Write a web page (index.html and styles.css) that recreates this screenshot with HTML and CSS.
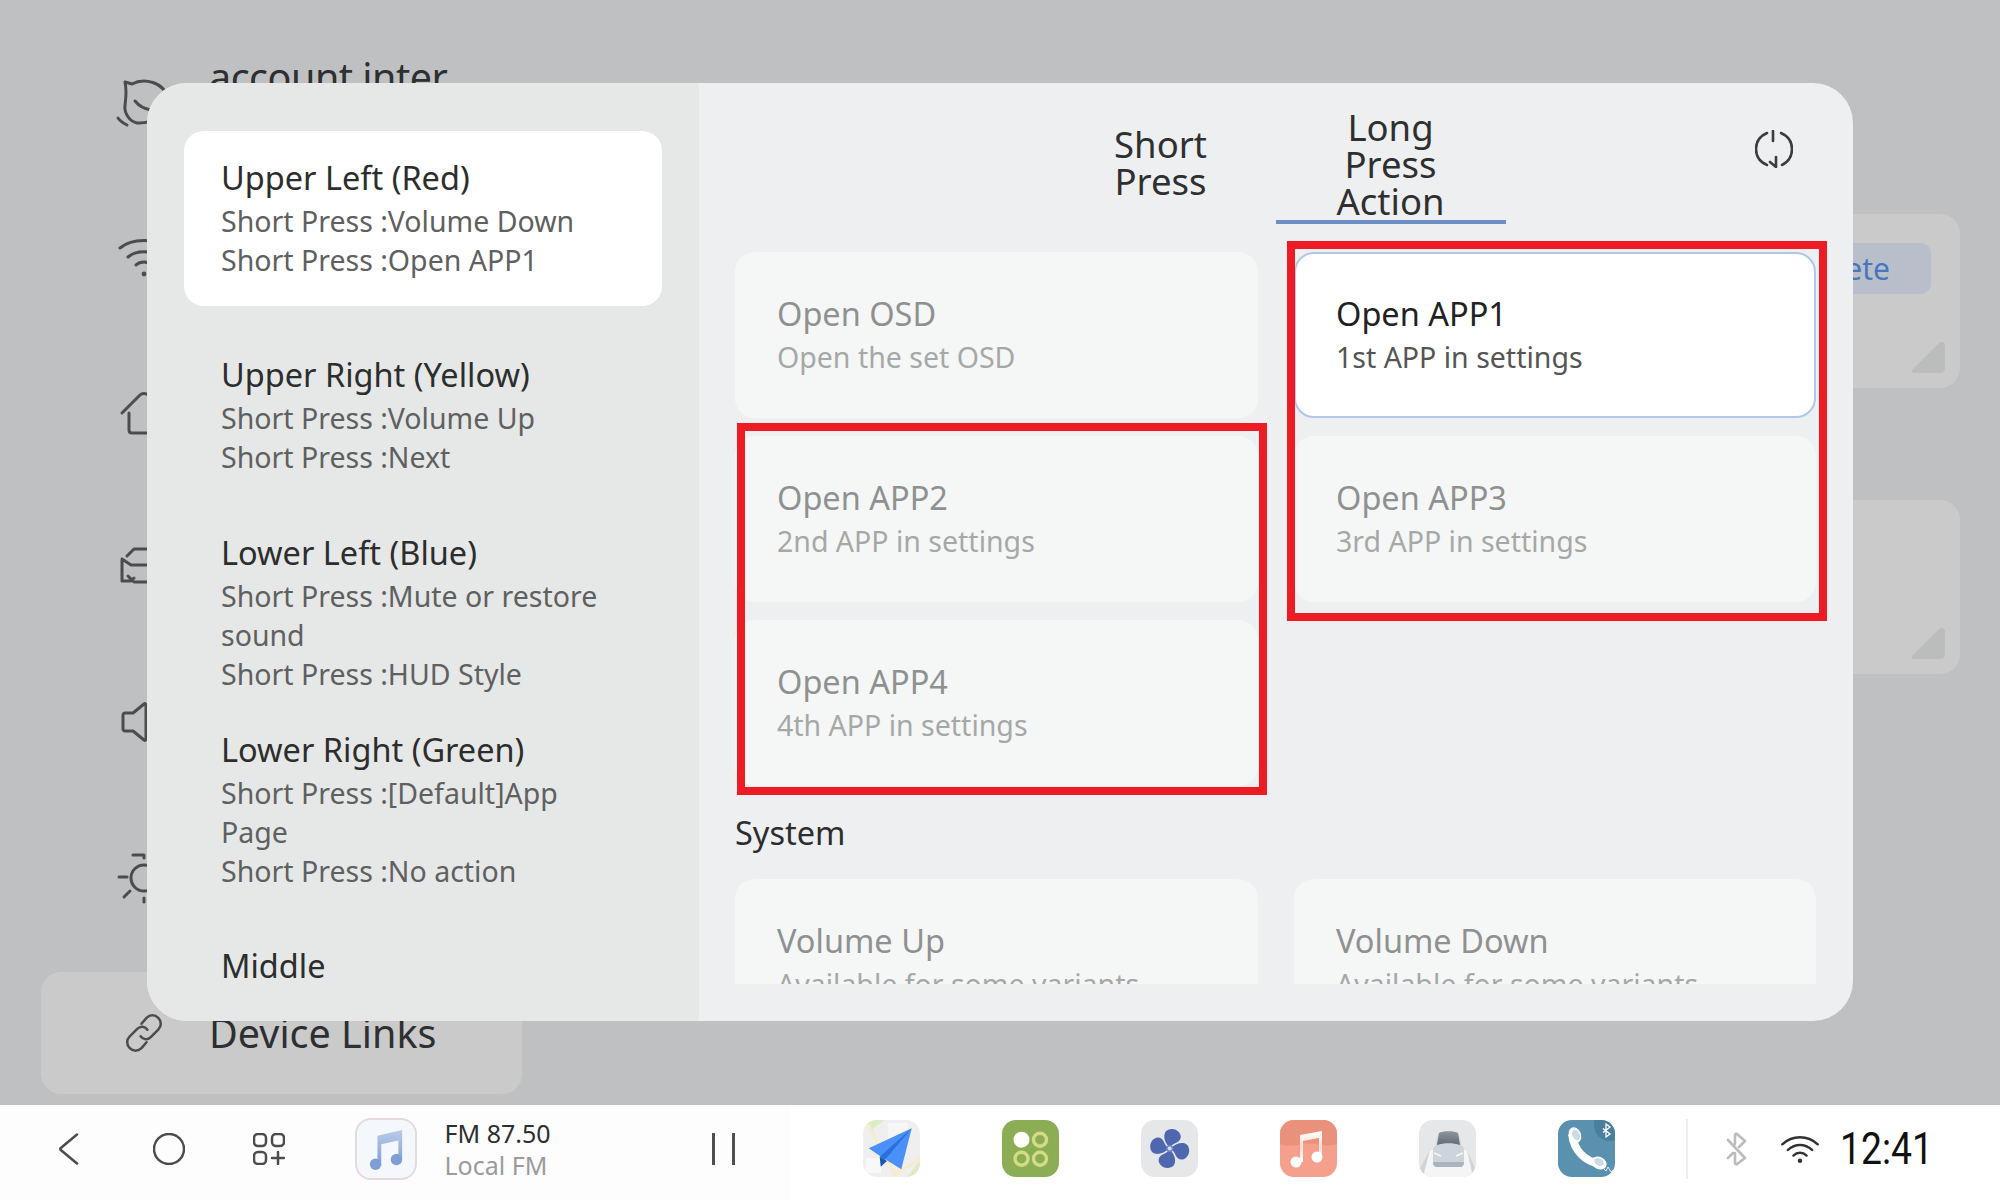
FILE: index.html
```html
<!DOCTYPE html>
<html lang="en">
<head>
<meta charset="utf-8">
<title>Steering wheel keys</title>
<link rel="stylesheet" href="styles.css">
</head>
<body>
<div class="screen">
  <main class="page">
    <nav class="side">
      <div class="side-row">
        <svg class="side-icon" viewBox="0 0 48 48"><path d="M2 3 L9 5 C20 -1 42 2 44 20 C45 32 32 45 14 44 C6 42 1 34 2 26 C3 18 4 12 2 3Z M12 22 C16 27 22 30 28 31 M-5 39 C-3 42 0 44 4 46" transform="translate(3 0)"/></svg>
        <span class="side-label side-label-up">account inter</span>
      </div>
      <div class="side-row">
        <svg class="side-icon" viewBox="0 0 48 48"><path d="M0 14 C12 4 36 4 48 14 M8 23 C16 16 32 16 40 23 M16 31 C20 27 28 27 32 31"/><circle cx="24" cy="40" r="2.4" class="dot"/></svg>
      </div>
      <div class="side-row">
        <svg class="side-icon" viewBox="0 0 48 48"><path d="M2 24 L20 6 C22 4 26 4 28 6 L46 24 M9 24 L9 41 C9 43 10 44 12 44 L36 44 C38 44 39 43 39 41 L39 24"/></svg>
      </div>
      <div class="side-row">
        <svg class="side-icon" viewBox="0 0 48 48"><path d="M7 12 L14 5 L44 5 L44 38 L14 38 L8 32 M2 15 L11 21 L44 21 M2 15 L2 37 L11 37 L14 34"/></svg>
      </div>
      <div class="side-row">
        <svg class="side-icon" viewBox="0 0 48 48"><path d="M3 16 L3 30 C3 31 4 32 5 32 L13 32 L24 41 C25 42 26 41 26 40 L26 6 C26 5 25 4 24 5 L13 14 L5 14 C4 14 3 15 3 16Z"/></svg>
      </div>
      <div class="side-row">
        <svg class="side-icon" viewBox="0 0 48 48"><circle cx="24" cy="24" r="13"/><path d="M24 1 L24 4 M24 44 L24 48 M-1 23 L7 23 M10 37 L4 43 M13 1 L24 1"/></svg>
      </div>
      <div class="side-row side-row-active">
        <svg class="side-icon" viewBox="0 0 48 48"><path transform="translate(24 24) scale(.84) translate(-24 -24)" d="M21 13 L27 6 C31 2 37 2 41 6 C45 10 45 16 41 20 L32 29 C28 33 23 32 20 28 M27 35 L21 42 C17 46 11 46 7 42 C3 38 3 32 7 28 L16 19 C20 15 25 16 28 20"/></svg>
        <span class="side-label">Device Links</span>
      </div>
    </nav>
    <section class="content">
      <div class="bg-card">
        <div class="bg-button">Delete</div>
        <svg class="corner" viewBox="0 0 33 31"><path d="M0 28 L27 1 C29 -1 33 0 33 3 L33 26 C33 29 31 31 28 31 L2 31 C0 31 -1 29 0 28Z"/></svg>
      </div>
      <div class="bg-card">
        <svg class="corner" viewBox="0 0 33 31"><path d="M0 28 L27 1 C29 -1 33 0 33 3 L33 26 C33 29 31 31 28 31 L2 31 C0 31 -1 29 0 28Z"/></svg>
      </div>
    </section>
  </main>

  <footer class="taskbar">
    <div class="media">
      <svg class="nav-icon" viewBox="0 0 32 32"><path d="M25 1.500 L8.800 15 C8.200 15.600 8.200 16.400 8.800 17 L25 30.500"/></svg>
      <svg class="nav-icon" viewBox="0 0 32 32"><circle cx="16" cy="16" r="15"/></svg>
      <svg class="nav-icon" viewBox="0 0 32 32"><rect x="1" y="1" width="12" height="12" rx="4"/><rect x="19" y="1" width="12" height="12" rx="4"/><rect x="1" y="19" width="12" height="12" rx="4"/><path d="M19 25 L31 25 M25 19 L25 31"/></svg>
      <div class="music-tile">
        <svg class="music-note" viewBox="0 0 40 44">
          <defs><linearGradient id="noteFade" x1="0" y1="0" x2="0" y2="1"><stop offset="0" stop-color="#b9cbeb"/><stop offset="1" stop-color="#7d9fd3"/></linearGradient></defs>
          <path d="M11 8 L37 2 L37 33 L33 33 L33 13 L15 17 L15 39 L11 39Z" fill="url(#noteFade)"/>
          <circle cx="9" cy="38" r="6" fill="#7d9fd3"/><circle cx="31" cy="33" r="6" fill="#7d9fd3"/>
        </svg>
      </div>
      <div class="track">
        <div class="track-name">FM 87.50</div>
        <div class="track-sub">Local FM</div>
      </div>
      <div class="pause"><span class="pause-bar"></span><span class="pause-bar"></span></div>
    </div>
    <div class="dock">
      <svg class="app" viewBox="0 0 57 57">
        <rect width="57" height="57" fill="#efefef"/>
        <path d="M0 0 L22 0 L8 10Z M44 57 L57 40 L57 57Z" fill="#dcecc4"/>
        <rect x="25" y="3" width="20" height="15" fill="#f6f6f6"/><rect x="3" y="38" width="15" height="15" fill="#f8f8f8"/>
        <path d="M5 4 L33 57 M33 54 L57 39" stroke="#f6eccb" stroke-width="3" fill="none"/>
        <path d="M48.700 8.300 L5.700 28.300 L17 36 L38.300 49.300Z" fill="#4a90f8"/>
        <path d="M48.700 8.300 L16.700 36.700 L21.700 40Z" fill="#2a70d8"/>
        <path d="M16.700 36.700 L17.700 46.700 L24 41Z" fill="#1858b0"/>
      </svg>
      <svg class="app" viewBox="0 0 57 57">
        <rect width="57" height="57" fill="#8bae54"/>
        <circle cx="19.500" cy="19.700" r="8" fill="#fff"/>
        <g fill="none" stroke="#d3dc84" stroke-width="3.400"><circle cx="38" cy="19.700" r="6.500"/><circle cx="19.500" cy="38.700" r="6.500"/><circle cx="38" cy="38.700" r="6.500"/></g>
      </svg>
      <svg class="app" viewBox="0 0 57 57">
        <rect width="57" height="57" fill="#e5e7e9"/>
        <g transform="translate(28.700 28.500)" fill="#4f67ae">
          <path d="M-1 -2 C-5 -6 -7 -13 -4 -17 C-1 -20.500 6 -20.500 9.500 -16 C12.500 -12 11 -8 7 -6 C4 -5 2 -3 1 -2Z"/>
          <path d="M-1 -2 C-5 -6 -7 -13 -4 -17 C-1 -20.500 6 -20.500 9.500 -16 C12.500 -12 11 -8 7 -6 C4 -5 2 -3 1 -2Z" transform="rotate(90)"/>
          <path d="M-1 -2 C-5 -6 -7 -13 -4 -17 C-1 -20.500 6 -20.500 9.500 -16 C12.500 -12 11 -8 7 -6 C4 -5 2 -3 1 -2Z" transform="rotate(180)"/>
          <path d="M-1 -2 C-5 -6 -7 -13 -4 -17 C-1 -20.500 6 -20.500 9.500 -16 C12.500 -12 11 -8 7 -6 C4 -5 2 -3 1 -2Z" transform="rotate(270)"/>
          <circle r="3.500" fill="#6f85c2"/><circle r="2" fill="#d5dcec"/>
        </g>
      </svg>
      <svg class="app" viewBox="0 0 57 57">
        <defs><linearGradient id="stemFade" x1="0" y1="0" x2="0" y2="1"><stop offset="0" stop-color="#fff"/><stop offset=".5" stop-color="#fbdcd3"/><stop offset="1" stop-color="#fff"/></linearGradient></defs>
        <rect width="57" height="57" fill="#f5a08c"/>
        <path d="M0 0 L57 0 L57 24 C45 28 35 22 22 24 C12 26 6 26 0 24Z" fill="#ea917b"/>
        <path d="M20 15 L42 11 L42 37 L39 37 L39 18 L23 21 L23 42 L20 42Z" fill="url(#stemFade)"/>
        <circle cx="16" cy="42" r="5.500" fill="#fff"/><circle cx="37" cy="37" r="5.500" fill="#fff"/>
      </svg>
      <svg class="app" viewBox="0 0 57 57">
        <defs><linearGradient id="carGlass" x1="0" y1="0" x2="0" y2="1"><stop offset="0" stop-color="#8d969e"/><stop offset="1" stop-color="#626c76"/></linearGradient></defs>
        <rect width="57" height="57" fill="#e5e7e9"/>
        <path d="M12 28 L0 50 L0 57 L6 57 Z M47 28 L57 50 L57 57 L51 57Z" fill="#cdd5dc"/>
        <path d="M11 30 L48 30 L54 57 L4 57Z" fill="#f3f5f7"/>
        <path d="M17 25 C17 22 19 12 22 12 L37 12 C40 12 42 22 42 25 L45 28 L45 42 C45 46 43 47 41 47 L18 47 C16 47 14 46 14 42 L14 28Z" fill="#ccd5da"/>
        <path d="M18 25 L20 13 C24 10.500 35 10.500 39 13 L41 25 C34 22.500 25 22.500 18 25Z" fill="url(#carGlass)"/>
        <path d="M14 42 L45 42 C45 46 43 47 41 47 L18 47 C16 47 14 46 14 42Z" fill="#aab4bc"/>
        <path d="M15 33 L22 36 M44 33 L37 36" stroke="#f4f6f8" stroke-width="1.800" fill="none"/>
      </svg>
      <svg class="app" viewBox="0 0 57 57">
        <rect width="57" height="57" fill="#5a91ae"/>
        <circle cx="52" cy="5" r="16" fill="#4a7f9c"/>
        <path d="M14 14 C16 30 26 41 42 44" stroke="#fff" stroke-width="8" fill="none"/>
        <ellipse cx="17" cy="15" rx="6" ry="8" transform="rotate(-25 17 15)" fill="#fff"/>
        <ellipse cx="41" cy="43" rx="8" ry="6" transform="rotate(25 41 43)" fill="#fff"/>
        <ellipse cx="18" cy="15" rx="3.500" ry="5.500" transform="rotate(-25 18 15)" fill="#c9dbe5"/>
        <ellipse cx="41" cy="42" rx="5" ry="3.500" transform="rotate(25 41 42)" fill="#c9dbe5"/>
        <path d="M45 48 L48 51 L50 47 L53 52 L55 50" stroke="#e5eef3" stroke-width="1" fill="none"/>
        <path d="M45 8.500 L52 14 L48 17 L48 4 L52 7 L45 12.500" stroke="#fff" stroke-width="1.300" fill="none"/>
      </svg>
      <span class="divider"></span>
      <svg class="bt" viewBox="0 0 24 34"><path d="M1 8 L18 26 L10 32 C9 33 8 32 8 31 L8 21 M1 26 L6 21 M12 15 L18 9 L10 2 C9 1 8 2 8 3 L8 12"/></svg>
      <svg class="wifi" viewBox="0 0 40 30"><path d="M1 10 C12 0 28 0 39 10 M7 16 C15 9 25 9 33 16 M13 22 C17 18 23 18 27 22"/><circle cx="20" cy="27.500" r="2.400" class="wifi-dot"/></svg>
      <div class="clock">12:41</div>
    </div>
  </footer>

  <div class="modal">
    <aside class="keys">
      <div class="key key-active">
        <div class="key-title">Upper Left (Red)</div>
        <div class="key-sub">Short Press :Volume Down</div>
        <div class="key-sub">Short Press :Open APP1</div>
      </div>
      <div class="key">
        <div class="key-title">Upper Right (Yellow)</div>
        <div class="key-sub">Short Press :Volume Up</div>
        <div class="key-sub">Short Press :Next</div>
      </div>
      <div class="key">
        <div class="key-title">Lower Left (Blue)</div>
        <div class="key-sub">Short Press :Mute or restore sound</div>
        <div class="key-sub">Short Press :HUD Style</div>
      </div>
      <div class="key">
        <div class="key-title">Lower Right (Green)</div>
        <div class="key-sub">Short Press :[Default]App Page</div>
        <div class="key-sub">Short Press :No action</div>
      </div>
      <div class="key">
        <div class="key-title">Middle</div>
        <div class="key-sub">&nbsp;</div>
        <div class="key-sub">&nbsp;</div>
      </div>
    </aside>
    <section class="actions">
      <div class="tabs">
        <div class="tab tab-short">Short<br>Press</div>
        <div class="tab tab-active">Long<br>Press<br>Action</div>
      </div>
      <svg class="reset" viewBox="0 0 38 38"><path d="M12 3 C5 6 1 12 1 19 C1 26 5 32 12 35 M26 3 C33 6 37 12 37 19 C37 26 33 32 27 35 M18 1 L18 11 M21 27 L21 37 L15 32"/></svg>
      <div class="scroller">
        <div class="grid">
          <div class="card"><div class="card-title">Open OSD</div><div class="card-sub">Open the set OSD</div></div>
          <div class="card card-on"><div class="card-title">Open APP1</div><div class="card-sub">1st APP in settings</div></div>
          <div class="card"><div class="card-title">Open APP2</div><div class="card-sub">2nd APP in settings</div></div>
          <div class="card"><div class="card-title">Open APP3</div><div class="card-sub">3rd APP in settings</div></div>
          <div class="card"><div class="card-title">Open APP4</div><div class="card-sub">4th APP in settings</div></div>
        </div>
        <h2 class="group">System</h2>
        <div class="grid">
          <div class="card"><div class="card-title">Volume Up</div><div class="card-sub">Available for some variants</div></div>
          <div class="card"><div class="card-title">Volume Down</div><div class="card-sub">Available for some variants</div></div>
        </div>
      </div>
    </section>
    <div class="mark mark-right"></div>
    <div class="mark mark-left"></div>
  </div>
</div>
</body>
</html>
```

FILE: styles.css
```css
* { box-sizing: border-box; }
html, body { margin: 0; height: 100%; }
body { font-family: "Noto Sans", "Open Sans", sans-serif; background: #bfc0c2; overflow: hidden; }

.screen { position: relative; width: 2000px; height: 1200px; display: flex; flex-direction: column; }

/* dimmed page behind the dialog */
.page { height: 1105px; display: flex; }
.side { width: 481px; margin-left: 41px; padding-top: 42px; display: flex; flex-direction: column; gap: 33px; flex: none; }
.side-row { height: 122px; display: flex; align-items: center; gap: 41px; padding-left: 79px; border-radius: 20px; flex: none; }
.side-row-active { background: #cacacb; }
.side-icon { width: 48px; height: 48px; flex: none; overflow: visible; fill: none; stroke: #4b4c4d; stroke-width: 3; stroke-linecap: round; stroke-linejoin: round; }
.side-icon .dot { fill: #4b4c4d; stroke: none; }
.side-label { font-size: 39.500px; line-height: 52px; color: #2e2f30; white-space: nowrap; }
.side-label-up { margin-bottom: 53px; letter-spacing: -.5px; }

.content { flex: 1; padding: 214px 40px 0 0; display: flex; flex-direction: column; gap: 112px; }
.bg-card { height: 174px; background: #cacacb; border-radius: 20px; display: flex; flex-direction: column; align-items: flex-end; padding: 29px 15px 15px 0; }
.bg-button { height: 51px; padding: 0 41px 0 80px; margin-right: 14px; border-radius: 10px; background: #b8bfca; color: #4a76bd; font-size: 30px; line-height: 51px; }
.corner { width: 33px; height: 31px; margin-top: auto; fill: #bbbdbc; }

/* bottom bar */
.taskbar { height: 95px; display: flex; background: #fff; }
.media { width: 790px; flex: none; background: #fdfdfd; display: flex; align-items: center; padding: 0 55px 8px 52px; }
.nav-icon { width: 32px; height: 32px; margin-right: 68.500px; flex: none; fill: none; stroke: #4c4c4c; stroke-width: 2.5; stroke-linecap: round; stroke-linejoin: round; }
.music-tile { width: 62px; height: 62px; border: 2px solid #e5dadd; border-radius: 16px; background: #f4f8fd; display: flex; align-items: center; justify-content: center; flex: none; margin-left: 1px; }
.music-note { width: 38px; height: 42px; }
.track { margin-left: 28px; }
.track-name { font-size: 25px; line-height: 32px; color: #2e2e2e; }
.track-sub { font-size: 25px; line-height: 32px; color: #9b9b9b; }
.pause { margin-left: auto; display: flex; gap: 17px; }
.pause-bar { width: 3px; height: 32px; background: #4f4f4f; }

.dock { flex: 1; display: flex; align-items: center; padding: 0 0 8px 73px; }
.app { width: 57px; height: 57px; border-radius: 14px; margin-right: 82px; flex: none; }
.app:nth-of-type(6) { margin-right: 0; }
.divider { width: 2px; height: 60px; margin-left: 71px; background: #ededed; flex: none; }
.bt { width: 26px; height: 34px; margin-left: 38px; flex: none; fill: none; stroke: #bcbcbc; stroke-width: 2.6; stroke-linecap: round; stroke-linejoin: round; }
.wifi { width: 38px; height: 28px; margin-left: 29px; flex: none; fill: none; stroke: #333; stroke-width: 2.6; stroke-linecap: round; }
.wifi-dot { fill: #333; stroke: none; }
.clock { margin-left: 21px; font-family: Roboto, sans-serif; font-size: 45px; font-weight: 400; color: #111; transform: scaleX(.83); transform-origin: left center; }

/* dialog */
.modal { position: absolute; left: 147px; top: 83px; width: 1706px; height: 938px; border-radius: 40px; overflow: hidden; display: flex; background: #eeeff1; }
.keys { width: 552px; flex: none; background: #e6e8e8; padding: 48px 37px 0; display: flex; flex-direction: column; gap: 22px; }
.key { height: 175px; flex: none; padding: 0 37px; border-radius: 20px; display: flex; flex-direction: column; justify-content: center; }
.key-active { background: #fff; }
.key-title { font-size: 32.500px; line-height: 42px; margin-bottom: 3px; color: #2c2d2d; }
.key-sub { font-size: 28.500px; line-height: 39px; color: #5f6060; }

.actions { flex: 1; position: relative; padding: 25px 37px 0 36px; display: flex; flex-direction: column; }
.tabs { display: flex; justify-content: center; align-items: center; }
.tab { width: 230px; font-size: 36.500px; line-height: 37px; text-align: center; color: #2e2f30; border-bottom: 4px solid transparent; }
.tab-short { margin-top: -2px; }
.tab-active { border-bottom: 4px solid #6d90c4; padding-top: 1px; }
.reset { position: absolute; right: 60px; top: 47px; width: 38px; height: 38px; fill: none; stroke: #3b3c3d; stroke-width: 2.6; stroke-linecap: round; stroke-linejoin: round; }

.scroller { margin-top: 28px; height: 732px; flex: none; overflow: hidden; }
.grid { display: grid; grid-template-columns: 523px 522px; column-gap: 36px; row-gap: 18px; }
.card { height: 166px; padding-left: 42px; border-radius: 20px; background: #f5f7f6; display: flex; flex-direction: column; justify-content: center; }
.card-title { font-size: 32.500px; line-height: 42px; margin-bottom: 3px; color: #8f9191; }
.card-sub { font-size: 28.500px; line-height: 39px; color: #a6a8a8; }
.card-on { background: #fff; border: 2px solid #afc7e8; padding-left: 40px; }
.card-on .card-title { color: #222; }
.card-on .card-sub { color: #555; }
.group { margin: 25px 0 24px; font-size: 32.500px; line-height: 44px; font-weight: 400; color: #2c2d2d; }

/* red annotation frames drawn over the screenshot */
.mark { position: absolute; border: 8px solid #ed1c24; pointer-events: none; }
.mark-right { left: 1140px; top: 158px; width: 540px; height: 380px; }
.mark-left { left: 590px; top: 340px; width: 530px; height: 372px; }
```
